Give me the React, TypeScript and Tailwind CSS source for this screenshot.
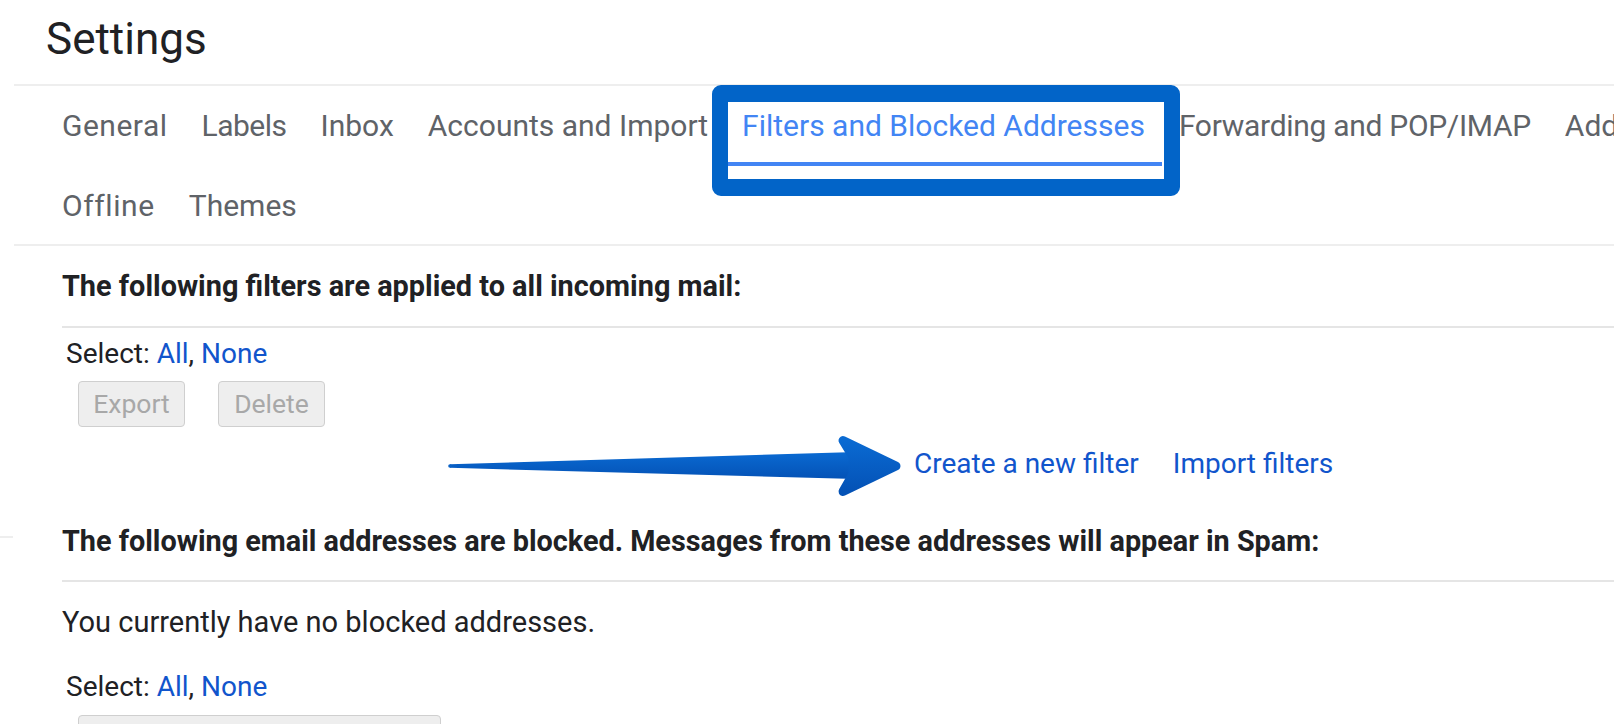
import React from "react";

function Tab({ label, active = false, className = "" }: { label: string; active?: boolean; className?: string }) {
  return (
    <div
      className={
        "relative shrink-0 whitespace-nowrap px-[17px] text-[30px] leading-[80px] " +
        (active ? "text-[#4285f4] " : "text-[#5f6368] ") +
        className
      }
    >
      {label}
      {active && <span className="absolute bottom-0 left-0 right-0 h-[4px] bg-[#4285f4]" />}
    </div>
  );
}

function SelectRow({ className = "" }: { className?: string }) {
  return (
    <div className={"ml-[4px] text-[28px] leading-[34px] text-[#202124] " + className}>
      Select: <span className="text-[#1155cc]">All</span>, <span className="text-[#1155cc]">None</span>
    </div>
  );
}

function GrayButton({ label, className = "" }: { label: string; className?: string }) {
  return (
    <div
      className={
        "flex h-[46px] items-center justify-center rounded-[4px] border border-[#cfcfcf] bg-[#eeeeee] text-[26.5px] leading-[44px] text-[#a8a8a8] " +
        className
      }
    >
      {label}
    </div>
  );
}

export default function App() {
  return (
    <div className="relative flex h-[724px] w-[1614px] overflow-hidden bg-white font-['Roboto',sans-serif]">
      {/* left gutter */}
      <div className="w-[14px] shrink-0">
        <div className="mt-[536px] h-[2px] w-[13px] bg-[#eeeeee]" />
      </div>

      {/* main */}
      <div className="min-w-0 flex-1">
        <div className="h-[84px] pl-[32px] text-[44px] leading-[78px] text-[#202124]">Settings</div>
        <div className="h-[2px] bg-[#eeeeee]" />

        <div className="h-[158px]">
          <div className="flex h-[80px] pl-[31px]">
            <Tab label="General" className="tracking-[0.5px]" />
            <Tab label="Labels" className="tracking-[-0.5px]" />
            <Tab label="Inbox" />
            <Tab label="Accounts and Import" />
            <Tab label="Filters and Blocked Addresses" active />
            <Tab label="Forwarding and POP/IMAP" className="tracking-[-0.3px]" />
            <Tab label="Add-ons" />
          </div>
          <div className="flex h-[78px] pl-[31px]">
            <Tab label="Offline" className="tracking-[0.6px]" />
            <Tab label="Themes" />
          </div>
        </div>
        <div className="h-[2px] bg-[#eeeeee]" />

        <div className="pl-[48px]">
          <div className="h-[80px] text-[28.85px] font-bold leading-[80px] text-[#202124]">
            The following filters are applied to all incoming mail:
          </div>
          <div className="h-[2px] bg-[#e5e5e5]" />
          <SelectRow className="mt-[9px]" />
          <div className="ml-[16px] mt-[10px] flex gap-[33px]">
            <GrayButton label="Export" className="w-[107px]" />
            <GrayButton label="Delete" className="w-[107px]" />
          </div>
          <div className="ml-[852px] mt-[20px] flex gap-[34px] text-[28px] leading-[34px] text-[#1155cc]">
            <span>Create a new filter</span>
            <span>Import filters</span>
          </div>

          <div className="mt-[21px] h-[78px] text-[28.8px] font-bold leading-[78px] text-[#202124]">
            The following email addresses are blocked. Messages from these addresses will appear in Spam:
          </div>
          <div className="h-[2px] bg-[#e5e5e5]" />
          <div className="mt-[23px] text-[29px] leading-[34px] text-[#202124]">
            You currently have no blocked addresses.
          </div>
          <SelectRow className="mt-[31px]" />
          <div className="ml-[16px] mt-[11px] h-[46px] w-[363px] rounded-[4px] border border-[#cfcfcf] bg-[#eeeeee]" />
        </div>
      </div>

      {/* annotation box */}
      <div className="absolute left-[712px] top-[85px] h-[111px] w-[468px] rounded-[9px] border-x-[16px] border-y-[17px] border-[#0264c8]" />

      {/* annotation arrow */}
      <svg
        className="absolute left-[440px] top-[425px] h-[85px] w-[470px]"
        viewBox="440 425 470 85"
        fill="none"
      >
        <defs>
          <linearGradient id="arrowGrad" x1="0" y1="0" x2="0" y2="1">
            <stop offset="0" stopColor="#0a6ad2" />
            <stop offset="1" stopColor="#0452b6" />
          </linearGradient>
        </defs>
        <path d="M450 464.3 L856 452 L856 479 L450 467.8 Z" fill="url(#arrowGrad)" />
        <circle cx="450" cy="466" r="1.8" fill="#0a62c6" />
        <path
          d="M853 457 L843 440.5 L896 466 L843 491.5 L853 474 Z"
          fill="url(#arrowGrad)"
          stroke="url(#arrowGrad)"
          strokeWidth="9"
          strokeLinejoin="round"
        />
      </svg>
    </div>
  );
}
